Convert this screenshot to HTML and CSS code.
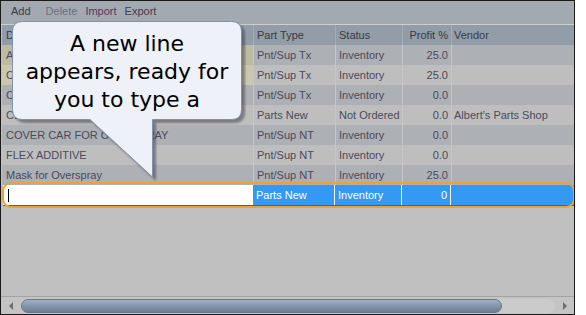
FILE: index.html
```html
<!DOCTYPE html>
<html lang="en">
<head>
  <meta charset="UTF-8">
  <title>Parts Grid</title>
  <link rel="stylesheet" href="styles.css">
</head>
<body>

  <div class="frame">
    <div class="toolbar">
      <span class="tool add">Add</span>
      <span class="tool disabled">Delete</span>
      <span class="tool import">Import</span>
      <span class="tool export">Export</span>
    </div>

    <div class="grid">
      <div class="row head">
        <div class="cell desc">Description</div>
        <div class="cell type">Part Type</div>
        <div class="cell status">Status</div>
        <div class="cell profit">Profit %</div>
        <div class="cell vendor">Vendor</div>
      </div>

      <div class="row dark">
        <div class="cell desc tan">Adhesive</div>
        <div class="cell type">Pnt/Sup Tx</div>
        <div class="cell status">Inventory</div>
        <div class="cell profit">25.0</div>
        <div class="cell vendor"></div>
      </div>
      <div class="row light">
        <div class="cell desc tan-light">CLEAR COAT</div>
        <div class="cell type">Pnt/Sup Tx</div>
        <div class="cell status">Inventory</div>
        <div class="cell profit">25.0</div>
        <div class="cell vendor"></div>
      </div>
      <div class="row dark">
        <div class="cell desc">Clip</div>
        <div class="cell type">Pnt/Sup Tx</div>
        <div class="cell status">Inventory</div>
        <div class="cell profit">0.0</div>
        <div class="cell vendor"></div>
      </div>
      <div class="row light">
        <div class="cell desc">CLIP</div>
        <div class="cell type">Parts New</div>
        <div class="cell status">Not Ordered</div>
        <div class="cell profit">0.0</div>
        <div class="cell vendor">Albert's Parts Shop</div>
      </div>
      <div class="row dark">
        <div class="cell desc">COVER CAR FOR OVERSPRAY</div>
        <div class="cell type">Pnt/Sup NT</div>
        <div class="cell status">Inventory</div>
        <div class="cell profit">0.0</div>
        <div class="cell vendor"></div>
      </div>
      <div class="row light">
        <div class="cell desc">FLEX ADDITIVE</div>
        <div class="cell type">Pnt/Sup NT</div>
        <div class="cell status">Inventory</div>
        <div class="cell profit">0.0</div>
        <div class="cell vendor"></div>
      </div>
      <div class="row dark">
        <div class="cell desc">Mask for Overspray</div>
        <div class="cell type">Pnt/Sup NT</div>
        <div class="cell status">Inventory</div>
        <div class="cell profit">25.0</div>
        <div class="cell vendor"></div>
      </div>

      <!-- new line being edited -->
      <div class="row selected">
        <div class="cell desc editor"><span class="caret"></span></div>
        <div class="cell type">Parts New</div>
        <div class="cell status">Inventory</div>
        <div class="cell profit">0</div>
        <div class="cell vendor"></div>
      </div>
    </div>

    <div class="empty"></div>

    <div class="hscroll">
      <span class="arrow left"></span>
      <div class="track">
        <div class="thumb"></div>
      </div>
      <span class="arrow right"></span>
    </div>

    <!-- callout bubble -->
    <div class="callout">
      <svg class="bubble" width="234" height="160" viewBox="0 0 234 160">
        <path d="M10.5,0.5 H219.5 Q229.5,0.5 229.5,10.5 V88.5 Q229.5,98.5 219.5,98.5 H140.5 V156 L78,98.5 H10.5 Q0.5,98.5 0.5,88.5 V10.5 Q0.5,0.5 10.5,0.5 Z" fill="#eef1f7" stroke="#7e93b1" stroke-width="1"/>
      </svg>
      <p class="callout-text">A new line<br>appears, ready for<br>you to type a</p>
    </div>
  </div>

</body>
</html>
```

FILE: styles.css
```css
body {
  margin: 0;
  background-color: #fff;
  font-family: 'Liberation Sans', Arial, sans-serif;
  font-size: 11px;
}

.frame {
  position: relative;
  width: 573px;
  height: 313px;
  border: 1px solid #1a1a1a;
  background-color: #c0c0c0;
  display: flex;
  flex-direction: column;
  overflow: hidden;
}

/* Toolbar */
.toolbar {
  height: 24px;
  box-sizing: border-box;
  background-color: #a2a9b1;
  border-bottom: 1px solid #cdd0d3;
  display: flex;
  align-items: center;
  gap: 8px;
  padding: 0 0 4px 10px;
  line-height: 16px;
}

.tool { color: #3c3c48; }
.tool.add { margin-right: 7px; }
.tool.disabled { color: #6c707e; }
.tool.import { color: #58385c; }
.tool.export { color: #4a3a4c; }

/* Grid */
.grid {
  display: flex;
  flex-direction: column;
  padding-left: 1px;
}

.row {
  display: flex;
  height: 20px;
  line-height: 20px;
  color: #4a4a5c;
}

.row.head {
  background-color: #929da8;
  color: #3a3a44;
}

.row.dark { background-color: #adb0b4; }
.row.light { background-color: #bebebe; }

.cell {
  box-sizing: border-box;
  border-right: 1px solid #c6c6c6;
  padding: 0 3px;
  white-space: nowrap;
  overflow: hidden;
}

.head .cell { border-right-color: #a4adb6; }

.desc { width: 252px; padding-left: 4px; }
.type { width: 82px; }
.status { width: 67px; }
.profit { width: 49px; text-align: right; }
.vendor { flex: 1; border-right: none; padding-left: 2px; }

.tan { background-color: #bdbaa2; }
.tan-light { background-color: #c9c7b0; }

/* Selected, editing row */
.row.selected {
  position: relative;
  height: 21px;
  line-height: 20px;
  background-color: #3399f3;
  color: #fff;
  margin-left: 1px;
  border-bottom: 1px solid #5b5e66;
  box-sizing: border-box;
}

.row.selected::after {
  content: "";
  position: absolute;
  top: -3px;
  bottom: -3px;
  left: -1px;
  right: -1px;
  border: 2px solid #eea236;
  border-radius: 9px;
}

.selected .cell { border-right-color: #f2f6fb; }

.editor {
  width: 250px;
  background-color: #fff;
  border-right: none;
  padding-left: 5px;
}

.caret {
  display: inline-block;
  width: 1px;
  height: 13px;
  background-color: #000;
  vertical-align: middle;
  margin-top: -2px;
}

.empty {
  flex: 1;
}

/* Horizontal scrollbar */
.hscroll {
  height: 17px;
  border-top: 1px solid #a3a3a3;
  background-color: #c4c4c4;
  display: flex;
  align-items: center;
  padding: 0 4px;
  gap: 4px;
}

.arrow {
  width: 0;
  height: 0;
  border-top: 4px solid transparent;
  border-bottom: 4px solid transparent;
}

.arrow.left { border-right: 4px solid #6e6e6e; margin-left: 4px; }
.arrow.right { border-left: 4px solid #6e6e6e; margin-right: 3px; }

.track {
  flex: 1;
  height: 14px;
  border-radius: 7px;
  background-color: #cbcbcb;
  margin: 0 4px;
}

.thumb {
  width: 481px;
  height: 14px;
  box-sizing: border-box;
  border-radius: 7px;
  border: 1px solid #66778c;
  background: linear-gradient(#a0b0c4, #8495ab 50%, #6c7d93);
}

/* Callout */
.callout {
  position: absolute;
  left: 11px;
  top: 20px;
  width: 234px;
  height: 160px;
}

.bubble {
  position: absolute;
  left: 0;
  top: 0;
  filter: drop-shadow(3px 3px 1px rgba(40, 40, 50, 0.45));
}

.callout-text {
  position: relative;
  margin: 0;
  width: 230px;
  padding-top: 9px;
  text-align: center;
  font-family: 'DejaVu Sans', sans-serif;
  font-size: 22px;
  line-height: 28px;
  color: #000;
}
```
